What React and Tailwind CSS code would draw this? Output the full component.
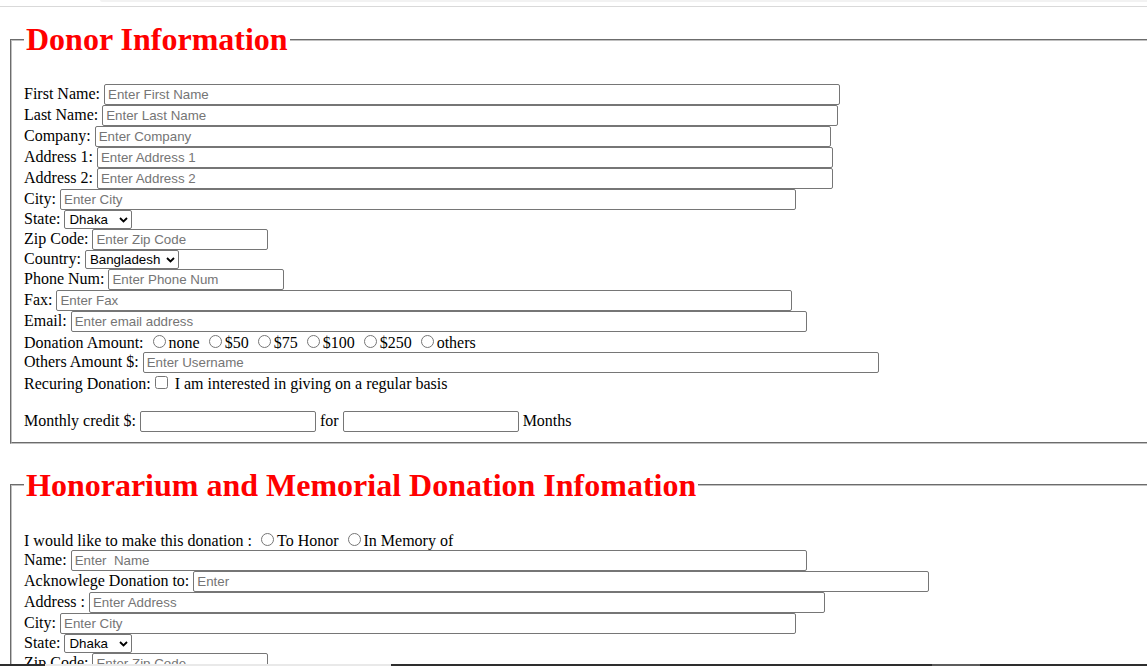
import React from "react";

const inp =
  "inline-block h-[21px] border border-[#767676] rounded-[2px] px-[3px] py-0 bg-white text-black text-[13.333px] leading-[normal] font-['Liberation_Sans',Arial,sans-serif] placeholder:text-[#757575] outline-none align-baseline";
const wide = inp + " w-[736px]";
const small = inp + " w-[176px]";

function Sel({ value, w }) {
  return (
    <span className="relative inline-block align-baseline">
      <select
        defaultValue={value}
        className={
          w +
          " appearance-none h-[19px] border border-[#767676] rounded-[2px] pl-[4px] pr-[14px] py-0 bg-white text-black text-[13.333px] leading-[normal] font-['Liberation_Sans',Arial,sans-serif] align-baseline outline-none"
        }
      >
        <option>{value}</option>
      </select>
      <svg
        className="pointer-events-none absolute right-[4px] top-[7px]"
        width="9"
        height="6"
        viewBox="0 0 9 6"
        fill="none"
      >
        <path d="M1 1l3.5 3.5L8 1" stroke="#000" strokeWidth="1.8" />
      </svg>
    </span>
  );
}

function Radio({ name }) {
  return <input type="radio" name={name} className="m-[3px_3px_0_5px] align-baseline" />;
}

function Legend({ children }) {
  return (
    <legend className="px-[2px]">
      <h1 className="my-[21.44px] text-[32px] font-bold text-[#ff0000] leading-[normal]">
        {children}
      </h1>
    </legend>
  );
}

const fs =
  "ml-[10px] mr-[2px] w-[1300px] border-2 [border-style:groove] border-[#c0c0c0] px-[12px] pt-[4.6px] pb-[10px]";

function Row({ label, children }) {
  return (
    <div className="whitespace-nowrap">
      {label} {children}
    </div>
  );
}

export default function App() {
  return (
    <div className="relative h-[666px] w-full overflow-hidden bg-white text-black text-[16px] leading-[normal] font-['Liberation_Serif','Times_New_Roman',serif]">
      <form>
        <fieldset className={fs}>
          <Legend>Donor Information</Legend>
          <Row label="First Name:">
            <input className={wide} placeholder="Enter First Name" />
          </Row>
          <Row label="Last Name:">
            <input className={wide} placeholder="Enter Last Name" />
          </Row>
          <Row label="Company:">
            <input className={wide} placeholder="Enter Company" />
          </Row>
          <Row label="Address 1:">
            <input className={wide} placeholder="Enter Address 1" />
          </Row>
          <Row label="Address 2:">
            <input className={wide} placeholder="Enter Address 2" />
          </Row>
          <Row label="City:">
            <input className={wide} placeholder="Enter City" />
          </Row>
          <Row label="State:">
            <Sel value="Dhaka" w="w-[68px]" />
          </Row>
          <Row label="Zip Code:">
            <input className={small} placeholder="Enter Zip Code" />
          </Row>
          <Row label="Country:">
            <Sel value="Bangladesh" w="w-[94px]" />
          </Row>
          <Row label="Phone Num:">
            <input className={small} placeholder="Enter Phone Num" />
          </Row>
          <Row label="Fax:">
            <input className={wide} placeholder="Enter Fax" />
          </Row>
          <Row label="Email:">
            <input className={wide} placeholder="Enter email address" />
          </Row>
          <div className="whitespace-nowrap">
            Donation Amount: <Radio name="amt" />none <Radio name="amt" />$50{" "}
            <Radio name="amt" />$75 <Radio name="amt" />$100 <Radio name="amt" />$250{" "}
            <Radio name="amt" />others
          </div>
          <Row label="Others Amount $:">
            <input className={wide} placeholder="Enter Username" />
          </Row>
          <div className="whitespace-nowrap">
            Recuring Donation:
            <input type="checkbox" className="m-[3px_3px_3px_4px] align-baseline" /> I am
            interested in giving on a regular basis
          </div>
          <div className="h-[18px]" />
          <div className="whitespace-nowrap">
            Monthly credit $: <input className={small} /> for <input className={small} /> Months
          </div>
        </fieldset>

        <fieldset className={fs + " mt-[1px]"}>
          <Legend>Honorarium and Memorial Donation Infomation</Legend>
          <div className="whitespace-nowrap">
            I would like to make this donation : <Radio name="hon" />To Honor{" "}
            <Radio name="hon" />In Memory of
          </div>
          <Row label="Name:">
            <input className={wide} placeholder="Enter  Name" />
          </Row>
          <Row label="Acknowlege Donation to:">
            <input className={wide} placeholder="Enter" />
          </Row>
          <Row label="Address :">
            <input className={wide} placeholder="Enter Address" />
          </Row>
          <Row label="City:">
            <input className={wide} placeholder="Enter City" />
          </Row>
          <Row label="State:">
            <Sel value="Dhaka" w="w-[68px]" />
          </Row>
          <Row label="Zip Code:">
            <input className={small} placeholder="Enter Zip Code" />
          </Row>
          <Row label="Country:">
            <Sel value="Bangladesh" w="w-[94px]" />
          </Row>
        </fieldset>
      </form>

      <div className="absolute left-[100px] right-0 top-0 h-[2px] rounded-bl-[4px] bg-[#f2f2f2]" />
      <div className="absolute left-0 right-0 top-[6px] h-px bg-[#d9d9d9]" />
      <div className="absolute bottom-0 left-0 right-0 h-[2px] bg-[#2e2e2e]">
        <div className="absolute left-[45px] top-0 h-full w-[346px] bg-[#e9e9e9]" />
        <div className="absolute left-[932px] top-0 h-full w-[48px] bg-[#5c5c5c]" />
      </div>
    </div>
  );
}
